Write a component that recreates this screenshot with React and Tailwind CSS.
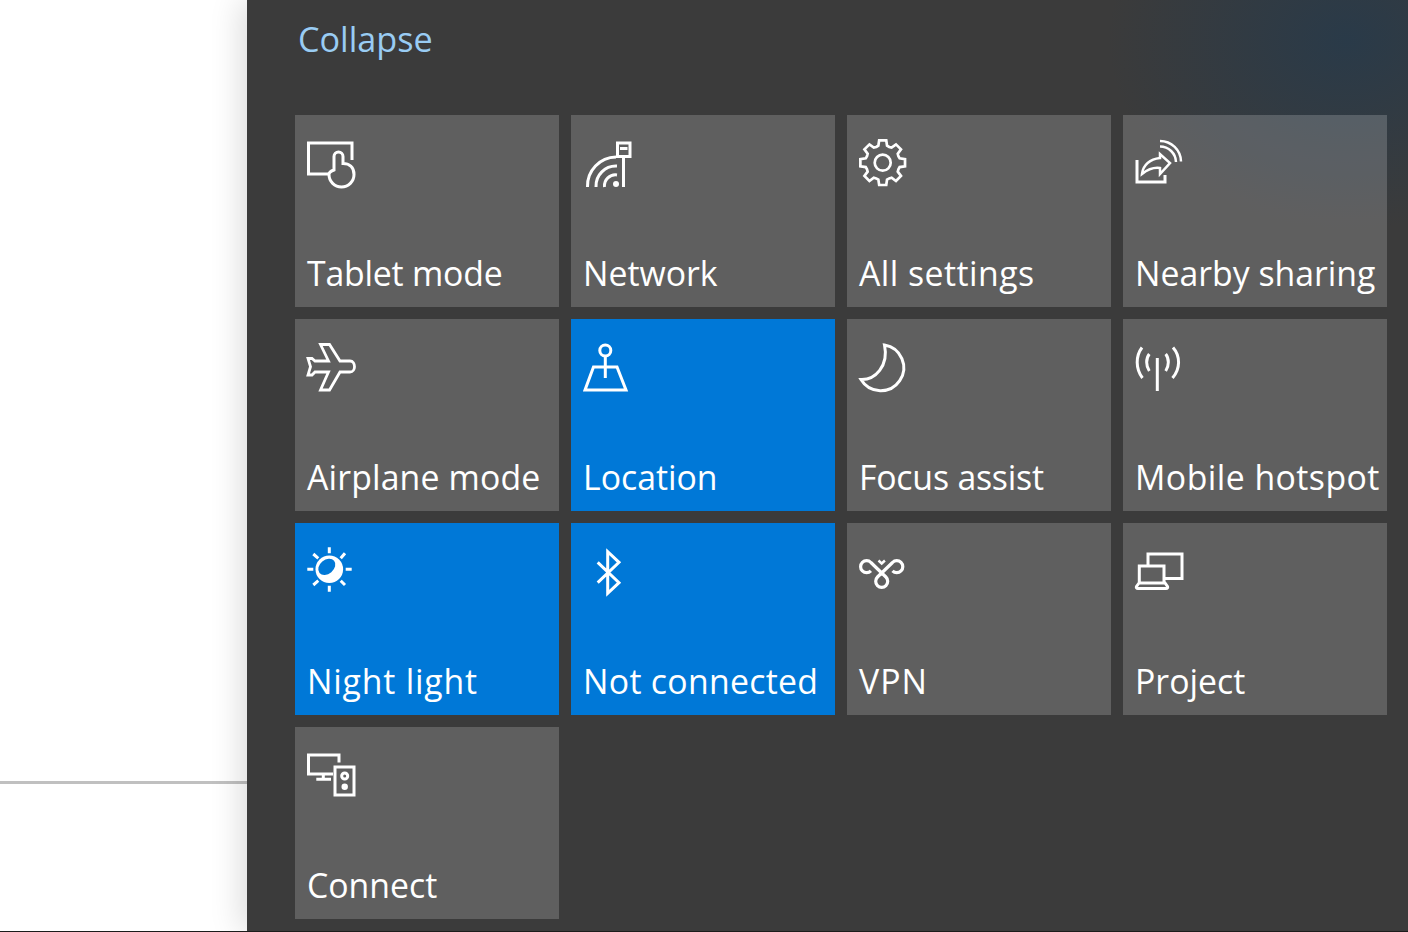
const S = ({ children, w = 3 }) => (
  <svg width="48" height="48" viewBox="0 0 48 48" fill="none" stroke="white" strokeWidth={w} className="block overflow-visible">
    {children}
  </svg>
);

function gearPath() {
  const cx = 23.7, cy = 22.7, n = 8, pts = [];
  for (let i = 0; i < n; i++) {
    const a = (i * 2 * Math.PI) / n - Math.PI / 2;
    const step = (2 * Math.PI) / n;
    const list = [
      [17, -0.5 * step],
      [17.5, -0.32 * step],
      [22.6, -0.2 * step],
      [22.6, 0.2 * step],
      [17.5, 0.32 * step],
    ];
    list.forEach(([r, o]) => pts.push([cx + r * Math.cos(a + o), cy + r * Math.sin(a + o)]));
  }
  return "M" + pts.map((p) => p[0].toFixed(2) + " " + p[1].toFixed(2)).join("L") + "Z";
}

const Tablet = () => (
  <S>
    <path d="M21 34H1.500V3H45V20" />
    <path d="M27 30V16.500a4.500 4.500 0 0 1 9 0V23.500C42 23.500 47 27 47 34.500A12.500 12.500 0 0 1 22 34.500C22 32.500 24 31 27 30Z" />
  </S>
);
const Network = () => (
  <S>
    <path d="M4.500 47A29 29 0 0 1 33 17" />
    <path d="M13 47A20 20 0 0 1 34 26" />
    <path d="M21.500 47A11 11 0 0 1 34 35" />
    <circle cx="33" cy="44" r="3" fill="white" stroke="none" />
    <rect x="34.500" y="3" width="12.500" height="13.500" />
    <path d="M40.500 16V47M37 8.500H44.500" />
  </S>
);
const Gear = () => (
  <S w={2.7}>
    <path d={gearPath()} />
    <circle cx="23.700" cy="22.700" r="8" />
  </S>
);
const Share = () => (
  <S>
    <path d="M2 20V42H30V35" />
    <path d="M25 1A21 21 0 0 1 46 21.500" strokeWidth="2.500" />
    <path d="M25 6.500A16 16 0 0 1 41 22" strokeWidth="2.500" />
    <path d="M7 34C8 25 15 19 25 18V14L35 23L25 34V28C18 27 12 30 7 34Z" strokeWidth="2.500" />
  </S>
);
const Plane = () => (
  <S w={2.8}>
    <path d="M13.500 0.500H22.500L33 17H43C46 17 47.500 20 47.500 22.700C47.500 25 46 28 43 28H33L22.500 46H13.500L21.500 28H8L5 31H1L3.500 22.700L1 14.500H5L8 17H21.500Z" />
  </S>
);
const Location = () => (
  <S>
    <circle cx="22.300" cy="6.500" r="5.500" />
    <path d="M22.300 12V34" />
    <path d="M10.500 23H34L43 46H2Z" />
  </S>
);
const Moon = () => (
  <S>
    <path d="M25.500 1A23 23 0 1 1 2 35.500C16 36 30 22 25.500 1Z" />
  </S>
);
const Hotspot = () => (
  <S>
    <path d="M22.300 14V47" />
    <path d="M7 3.500C0.500 12 0.500 25 7.500 34M14.300 10C10.800 14.500 10.800 22 14.300 27" />
    <path d="M38 3.500C45.500 12 45.500 25 37.500 34M30.700 10C34.200 14.500 34.200 22 30.700 27" />
  </S>
);
const Sun = () => (
  <S w={3}>
    <path d="M22.300 -0.700V5.300M22.300 37.700V43.700M0.300 21.300H6.300M38.700 21.300H44.700M6.300 6L11.300 10.300M38 5.300L33.700 10.300M6.300 37L11.300 32.700M38 37L33.700 32.700" />
    <circle cx="22.300" cy="21.300" r="13.800" fill="white" stroke="none" />
    <ellipse cx="19.800" cy="18.800" rx="9.500" ry="7" transform="rotate(-40 19.800 18.800)" fill="#0078d7" stroke="none" />
  </S>
);
const Bluetooth = () => (
  <S>
    <path d="M14.700 14.300L36 34.700L24.700 45.300V3.700L36 14.300L14.700 34.700" />
  </S>
);
const Vpn = () => (
  <S w={3.2}>
    <path d="M11.900 22.900A6 6 0 1 1 11.900 14.500L26.900 29A6 6 0 1 1 18.500 29L33.500 14.500A6 6 0 1 1 33.500 22.900" />
    <path d="M19.500 12.500L22.700 15.500L25.900 12.500" strokeWidth="2.400" />
  </S>
);
const Project = () => (
  <S>
    <path d="M13 17V6H47V30.500H30" />
    <path d="M4.300 34V18H29V34" />
    <path d="M4 35L1.500 38.500C1 39.500 1.500 40.500 3 40.500H31C32.500 40.500 33 39.500 32.500 38.500L30 35Z" />
  </S>
);
const Connect = () => (
  <S>
    <path d="M32 10.500V3H1.500V22H26" />
    <path d="M16.300 22V27.300M9.300 27.300H24" />
    <rect x="28" y="15" width="19" height="28" />
    <circle cx="37.700" cy="24" r="3" />
    <circle cx="37.700" cy="34.700" r="3.200" fill="white" stroke="none" />
  </S>
);

const tiles = [
  ["Tablet mode", Tablet, false, "tracking-[-0.2px]"],
  ["Network", Network, false, "tracking-normal"],
  ["All settings", Gear, false, "tracking-[0.45px]"],
  ["Nearby sharing", Share, false, "tracking-normal"],
  ["Airplane mode", Plane, false, "tracking-[0.15px]"],
  ["Location", Location, true, "tracking-normal"],
  ["Focus assist", Moon, false, "tracking-[-0.2px]"],
  ["Mobile hotspot", Hotspot, false, "tracking-[0.45px]"],
  ["Night light", Sun, true, "tracking-[0.8px]"],
  ["Not connected", Bluetooth, true, "tracking-[0.3px]"],
  ["VPN", Vpn, false, "tracking-[1px]"],
  ["Project", Project, false, "tracking-normal"],
  ["Connect", Connect, false, "tracking-normal"],
];

function Tile({ label, Icon, on, track }) {
  return (
    <div className={`flex flex-col h-[192px] pl-3 pt-[25px] pb-[12px] ${on ? "bg-[#0078d7]" : "bg-white/[0.19]"}`}>
      <Icon />
      <div className={`mt-auto text-[33.8px] leading-[44px] text-white whitespace-nowrap ${track}`}>{label}</div>
    </div>
  );
}

export default function App() {
  return (
    <div className="flex flex-col h-[932px] w-[1408px] overflow-hidden bg-white font-['Open_Sans','Noto_Sans',sans-serif]">
      <div className="flex flex-1 min-h-0">
        <div className="flex flex-col w-[247px] bg-white">
          <div className="h-[781px]" />
          <div className="h-[3px] bg-[#c0c0c0]" />
        </div>
        <div className="flex-1 bg-[#3b3b3b] bg-[radial-gradient(ellipse_240px_190px_at_1100px_40px,rgba(35,58,78,0.72),rgba(35,58,78,0))] shadow-[-6px_0_30px_rgba(0,0,0,0.14)]">
          <div className="h-[115px] pl-[51px] pt-[15px] text-[34.2px] leading-[48px] text-[#99ccf3]">Collapse</div>
          <div className="grid grid-cols-[repeat(4,264px)] gap-3 ml-[48px]">
            {tiles.map(([label, Icon, on, track]) => (
              <Tile key={label} label={label} Icon={Icon} on={on} track={track} />
            ))}
          </div>
        </div>
      </div>
      <div className="h-px bg-[#1c1c1c]" />
    </div>
  );
}
